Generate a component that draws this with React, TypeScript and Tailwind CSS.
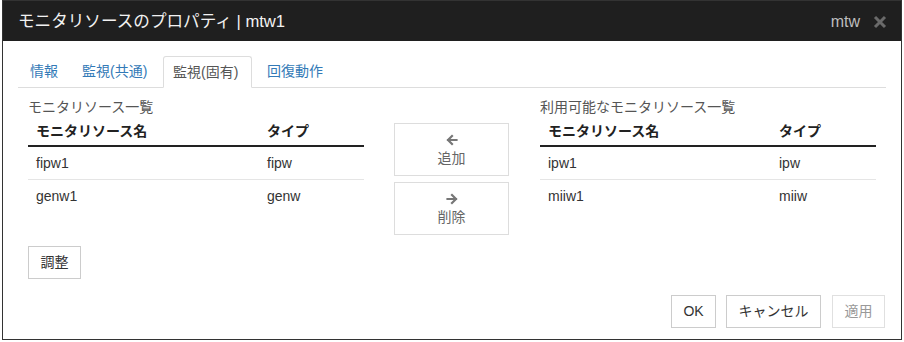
import React from "react";

const font = { fontFamily: '"Liberation Sans", "Noto Sans CJK JP", sans-serif' };

function ArrowLeft() {
  return (
    <svg width="12" height="12" viewBox="0 0 12 12" fill="none" stroke="#777" strokeWidth="2.2" strokeLinecap="square">
      <path d="M10.5 6H2M6 2L2 6l4 4" />
    </svg>
  );
}
function ArrowRight() {
  return (
    <svg width="12" height="12" viewBox="0 0 12 12" fill="none" stroke="#777" strokeWidth="2.2" strokeLinecap="square">
      <path d="M1.5 6H10M6 2l4 4-4 4" />
    </svg>
  );
}

function Table({ label, rows }: { label: string; rows: [string, string][] }) {
  return (
    <div className="w-[336px] flex flex-col">
      <div className="text-[14px] text-[#555] leading-[18px] h-[18px]">{label}</div>
      <div className="flex h-[30px] items-center border-b-2 border-[#222] mt-[1px] font-bold text-[14px] text-[#222]">
        <div className="w-[231px] pl-[8px]">モニタリソース名</div>
        <div className="pl-[8px]">タイプ</div>
      </div>
      {rows.map((r, i) => (
        <div
          key={i}
          className={`flex h-[33px] items-center text-[14px] text-[#333] ${i < rows.length - 1 ? "border-b border-[#e5e5e5]" : ""}`}
        >
          <div className="w-[231px] pl-[8px]">{r[0]}</div>
          <div className="pl-[8px]">{r[1]}</div>
        </div>
      ))}
    </div>
  );
}

export default function App() {
  return (
    <div className="w-[904px] h-[342px] bg-white pl-[2px] pr-[2px]" style={font}>
      <div className="w-[900px] h-[340px] border border-[#333] flex flex-col">
        <div className="h-[40px] bg-[#1f1f1f] flex items-center justify-between pl-[15px] pr-[14px]">
          <div className="text-[16.6px] text-[#f2f2f2] mt-[2px]">モニタリソースのプロパティ | mtw1</div>
          <div className="flex items-center gap-[13px] mt-[2px]">
            <span className="text-[16px] text-[#bdbdbd]">mtw</span>
            <svg width="14" height="14" viewBox="0 0 14 14" stroke="#6a6a6a" strokeWidth="3" strokeLinecap="butt">
              <path d="M2 2l10 10M12 2L2 12" />
            </svg>
          </div>
        </div>
        <div className="flex-1 flex flex-col pl-[15px] pr-[15px]">
          <div className="mt-[15px] flex h-[32px] border-b border-[#ddd]">
            <div className="w-[52px] pl-[12px] flex items-center text-[14px] text-[#337ab7]">情報</div>
            <div className="w-[93px] pl-[12px] flex items-center text-[14px] text-[#337ab7]">監視(共通)</div>
            <div className="w-[89px] pl-[9px] flex items-center text-[14px] text-[#555] border border-[#ddd] border-b-white bg-white mb-[-1px] rounded-t-[3px]">
              監視(固有)
            </div>
            <div className="pl-[15px] flex items-center text-[14px] text-[#337ab7]">回復動作</div>
          </div>
          <div className="flex pl-[10px] mt-[10px]">
            <Table label="モニタリソース一覧" rows={[["fipw1", "fipw"], ["genw1", "genw"]]} />
            <div className="ml-[30px] mt-[25px] flex flex-col gap-[6px]">
              <div className="w-[115px] h-[53px] border border-[#ddd] flex flex-col items-center justify-center text-[14px] text-[#666]">
                <ArrowLeft />
                <span className="mt-[4px] leading-[16px]">追加</span>
              </div>
              <div className="w-[115px] h-[53px] border border-[#ddd] flex flex-col items-center justify-center text-[14px] text-[#666]">
                <ArrowRight />
                <span className="mt-[4px] leading-[16px]">削除</span>
              </div>
            </div>
            <div className="ml-[31px]">
              <Table label="利用可能なモニタリソース一覧" rows={[["ipw1", "ipw"], ["miiw1", "miiw"]]} />
            </div>
          </div>
          <div className="pl-[10px] mt-[11px]">
            <div className="w-[53px] h-[33px] border border-[#ccc] flex items-center justify-center text-[14px] text-[#333]">調整</div>
          </div>
          <div className="flex justify-end mt-[16px] pr-[1px]">
            <div className="w-[45px] h-[33px] border border-[#ccc] flex items-center justify-center text-[14px] text-[#333]">OK</div>
            <div className="ml-[10px] w-[95px] h-[33px] border border-[#ccc] flex items-center justify-center text-[14px] text-[#333]">キャンセル</div>
            <div className="ml-[11px] w-[53px] h-[33px] border border-[#e0e0e0] flex items-center justify-center text-[14px] text-[#999]">適用</div>
          </div>
        </div>
      </div>
    </div>
  );
}
